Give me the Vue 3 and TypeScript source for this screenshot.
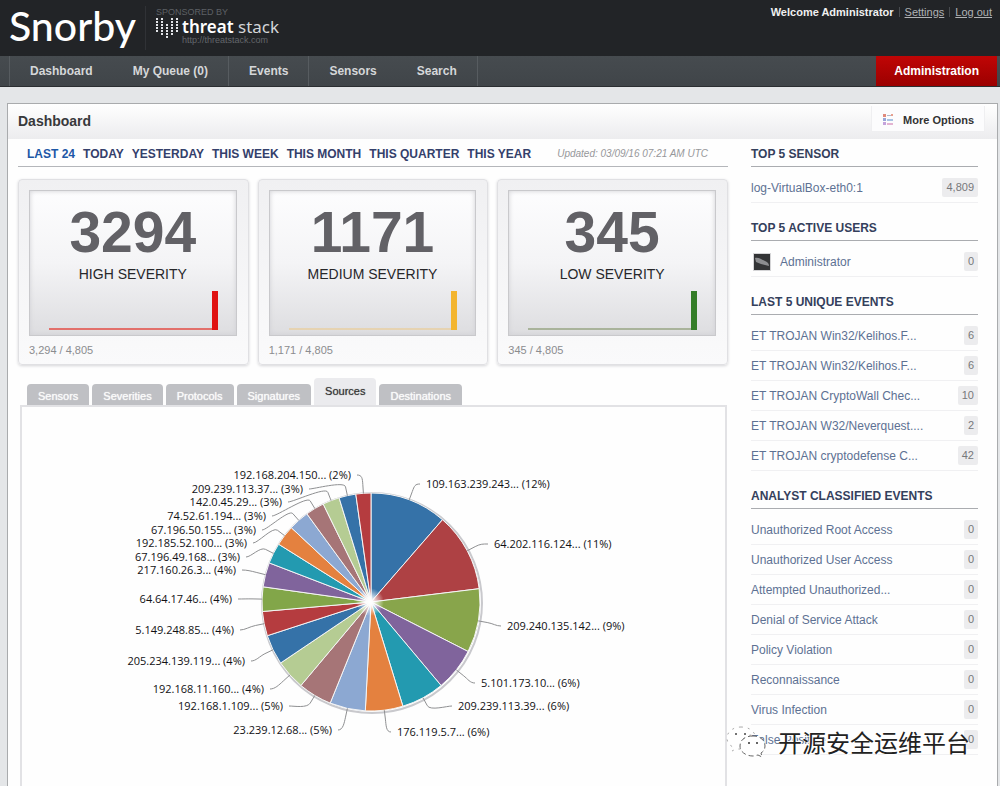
<script setup lang="ts">
interface NavItem { label: string; closes: boolean }
interface Severity { total: string; name: string; share: string; tone: string }
interface Entry { label: string; count: string; avatar?: boolean }
interface Section { title: string; entries: Entry[] }
interface Source { label: string; end: number; color: string; x: number; y: number }

const navItems: NavItem[] = [
  { label: 'Dashboard', closes: false },
  { label: 'My Queue (0)', closes: true },
  { label: 'Events', closes: true },
  { label: 'Sensors', closes: false },
  { label: 'Search', closes: true },
]

const ranges = ['LAST 24', 'TODAY', 'YESTERDAY', 'THIS WEEK', 'THIS MONTH', 'THIS QUARTER', 'THIS YEAR']

const severities: Severity[] = [
  { total: '3294', name: 'HIGH SEVERITY', share: '3,294 / 4,805', tone: 'high' },
  { total: '1171', name: 'MEDIUM SEVERITY', share: '1,171 / 4,805', tone: 'medium' },
  { total: '345', name: 'LOW SEVERITY', share: '345 / 4,805', tone: 'low' },
]

const tabs = ['Sensors', 'Severities', 'Protocols', 'Signatures', 'Sources', 'Destinations']

const sections: Section[] = [
  { title: 'TOP 5 SENSOR', entries: [{ label: 'log-VirtualBox-eth0:1', count: '4,809' }] },
  { title: 'TOP 5 ACTIVE USERS', entries: [{ label: 'Administrator', count: '0', avatar: true }] },
  {
    title: 'LAST 5 UNIQUE EVENTS',
    entries: [
      { label: 'ET TROJAN Win32/Kelihos.F...', count: '6' },
      { label: 'ET TROJAN Win32/Kelihos.F...', count: '6' },
      { label: 'ET TROJAN CryptoWall Chec...', count: '10' },
      { label: 'ET TROJAN W32/Neverquest....', count: '2' },
      { label: 'ET TROJAN cryptodefense C...', count: '42' },
    ],
  },
  {
    title: 'ANALYST CLASSIFIED EVENTS',
    entries: [
      { label: 'Unauthorized Root Access', count: '0' },
      { label: 'Unauthorized User Access', count: '0' },
      { label: 'Attempted Unauthorized...', count: '0' },
      { label: 'Denial of Service Attack', count: '0' },
      { label: 'Policy Violation', count: '0' },
      { label: 'Reconnaissance', count: '0' },
      { label: 'Virus Infection', count: '0' },
      { label: 'False Positive', count: '0' },
    ],
  },
]

// Slice ends are clockwise degrees from twelve o'clock; label points are relative to the pie's centre.
const sources: Source[] = [
  { label: '109.163.239.243... (12%)', end: 41, color: '#3572a8', x: 55, y: -118 },
  { label: '64.202.116.124... (11%)', end: 83, color: '#ae4144', x: 123, y: -58 },
  { label: '209.240.135.142... (9%)', end: 117, color: '#88a54b', x: 136, y: 24 },
  { label: '5.101.173.10... (6%)', end: 140, color: '#80649c', x: 110, y: 81 },
  { label: '209.239.113.39... (6%)', end: 163, color: '#239ab0', x: 87, y: 104 },
  { label: '176.119.5.7... (6%)', end: 183, color: '#e4813f', x: 26, y: 130 },
  { label: '23.239.12.68... (5%)', end: 202, color: '#8ca8d2', x: -39, y: 128 },
  { label: '192.168.1.109... (5%)', end: 220, color: '#a67577', x: -88, y: 104 },
  { label: '192.168.11.160... (4%)', end: 236, color: '#b5cc93', x: -107, y: 87 },
  { label: '205.234.139.119... (4%)', end: 252, color: '#3572a8', x: -126, y: 59 },
  { label: '5.149.248.85... (4%)', end: 265, color: '#b53c3f', x: -137, y: 28 },
  { label: '64.64.17.46... (4%)', end: 278, color: '#82a649', x: -139, y: -3 },
  { label: '217.160.26.3... (4%)', end: 291, color: '#80649c', x: -135, y: -32 },
  { label: '67.196.49.168... (3%)', end: 302, color: '#239ab0', x: -131, y: -45 },
  { label: '192.185.52.100... (3%)', end: 313, color: '#e4813f', x: -124, y: -59 },
  { label: '67.196.50.155... (3%)', end: 324, color: '#8ca8d2', x: -115, y: -72 },
  { label: '74.52.61.194... (3%)', end: 334, color: '#a67577', x: -105, y: -86 },
  { label: '142.0.45.29... (3%)', end: 343, color: '#b5cc93', x: -89, y: -100 },
  { label: '209.239.113.37... (3%)', end: 352, color: '#3572a8', x: -68, y: -113 },
  { label: '192.168.204.150... (2%)', end: 360, color: '#b53c3f', x: -20, y: -127 },
]

const radius = 109

function point(degrees: number, r: number): [number, number] {
  const a = (degrees * Math.PI) / 180
  return [Math.round(Math.sin(a) * r * 10) / 10, Math.round(-Math.cos(a) * r * 10) / 10]
}

const slices = sources.map((s, i) => {
  const start = i === 0 ? 0 : sources[i - 1].end
  const middle = (start + s.end) / 2
  const rim = point(middle, radius)
  const knee = point(middle, radius + 9)
  const bend = point(middle, radius + 15)
  const side = s.x > 0 ? 1 : -1
  return {
    ...s,
    anchor: s.x > 0 ? 'start' : 'end',
    area: `M0 0L${point(start, radius).join(' ')}A${radius} ${radius} 0 0 1 ${point(s.end, radius).join(' ')}Z`,
    line: `M${s.x - side * 6} ${s.y}C${s.x - side * 11} ${s.y} ${bend.join(' ')} ${knee.join(' ')}L${rim.join(' ')}`,
  }
})

// Threat Stack emblem: columns of dots, first and last dot row of each column.
const dotColumns: [number, number][] = [[0, 4], [0, 5], [2, 6], [0, 5], [0, 4]]
const dots = dotColumns.flatMap(([from, to], col) =>
  Array.from({ length: to - from + 1 }, (_, i) => ({ x: col * 5, y: (from + i) * 3 })),
)
</script>

<template>
  <div class="app">
    <header class="top">
      <a class="brand" href="#">Snorby</a>
      <a class="sponsor" href="#">
        <small class="by">SPONSORED BY</small>
        <span class="stack">
          <svg width="22" height="22" viewBox="0 0 22 22" aria-hidden="true">
            <rect v-for="(d, i) in dots" :key="i" :x="d.x" :y="d.y" width="2" height="2" fill="#e2e4e8" />
          </svg>
          <span class="stack-text">
            <span class="stack-name"><b>threat</b> stack</span>
            <small class="url">http://threatstack.com</small>
          </span>
        </span>
      </a>
      <div class="account">
        <strong>Welcome Administrator</strong><i></i><a href="#">Settings</a><i></i><a href="#">Log out</a>
      </div>
    </header>

    <nav class="menu">
      <a v-for="n in navItems" :key="n.label" href="#" :class="{ closes: n.closes }">{{ n.label }}</a>
      <a class="admin" href="#">Administration</a>
    </nav>

    <main class="panel">
      <div class="title">
        <h1>Dashboard</h1>
        <button class="more" type="button">
          <svg width="12" height="12" viewBox="0 0 12 12" aria-hidden="true">
            <rect x="1" y="0" width="3" height="3" fill="#e08a7c" /><rect x="5" y="1" width="6" height="1" fill="#b3b9cc" />
            <rect x="1" y="4" width="3" height="3" fill="#9aa6d8" /><rect x="5" y="5" width="6" height="2" fill="#a9c3e3" />
            <rect x="1" y="8" width="3" height="3" fill="#c4a3dc" /><rect x="5" y="9" width="6" height="2" fill="#e3b4d2" />
            <rect x="9" y="0" width="2" height="2" fill="#e6a08f" />
          </svg>
          More Options
        </button>
      </div>

      <div class="columns">
        <div class="left">
          <div class="ranges">
            <a v-for="(r, i) in ranges" :key="r" href="#" :class="{ current: i === 0 }">{{ r }}</a>
            <em>Updated: 03/09/16 07:21 AM UTC</em>
          </div>

          <div class="cards">
            <section v-for="s in severities" :key="s.tone" class="card" :class="s.tone">
              <div class="screen">
                <div class="total">{{ s.total }}</div>
                <div class="name">{{ s.name }}</div>
                <div class="spark"><span class="flat"></span><span class="peak"></span></div>
              </div>
              <div class="share">{{ s.share }}</div>
            </section>
          </div>

          <div class="tabs" role="tablist">
            <button v-for="t in tabs" :key="t" type="button" role="tab" :aria-selected="t === 'Sources'" :class="{ active: t === 'Sources' }">{{ t }}</button>
          </div>
          <div class="chart">
            <svg viewBox="-349 -195 703 376" role="img" aria-label="Sources">
              <defs>
                <radialGradient id="glow">
                  <stop offset="0" stop-color="#fff" />
                  <stop offset="0.3" stop-color="#fff" stop-opacity="0.85" />
                  <stop offset="1" stop-color="#fff" stop-opacity="0" />
                </radialGradient>
              </defs>
              <circle cx="1" cy="1" r="110" fill="#fff" stroke="#c9c9cd" stroke-width="2" />
              <g v-for="s in slices" :key="s.label">
                <path :d="s.area" :fill="s.color" class="slice" />
                <path :d="s.line" class="connector" />
                <text :x="s.x" :y="s.y + 4" :text-anchor="s.anchor">{{ s.label }}</text>
              </g>
              <circle cx="-1" cy="0" r="14" fill="url(#glow)" />
            </svg>
          </div>
        </div>

        <aside class="side">
          <section v-for="s in sections" :key="s.title">
            <h2>{{ s.title }}</h2>
            <ul>
              <li v-for="(e, i) in s.entries" :key="i">
                <svg v-if="e.avatar" width="18" height="18" viewBox="0 0 18 18" aria-hidden="true">
                  <rect width="18" height="18" fill="#d5d5d7" />
                  <rect x="1" y="1" width="16" height="16" fill="#333436" />
                  <path d="M2 5C6 4 9 7 12 8C14 9 16 10 16 13L12 12L8 11L3 9Z" fill="#8c8d90" />
                </svg>
                <a href="#">{{ e.label }}</a>
                <span class="count">{{ e.count }}</span>
              </li>
            </ul>
          </section>
        </aside>
      </div>
    </main>

    <div class="watermark">
      <svg width="42" height="34" viewBox="0 0 42 34" aria-hidden="true">
        <path d="M16 2C8 2 2 7 2 13C2 17 4 20 8 22L7 26L11 24C13 24 15 24 17 24C14 14 22 9 30 10C28 5 23 2 16 2Z" fill="#fff" stroke="#aaa" stroke-width="1" stroke-dasharray="2 5" />
        <path d="M28 11C20 11 15 15 15 21C15 27 21 31 28 31C30 31 32 30 33 30L37 32L36 28C39 26 40 24 40 21C40 15 35 11 28 11Z" fill="#fff" stroke="#666" stroke-width="1" stroke-dasharray="5 3" />
        <circle cx="11" cy="9" r="1" fill="#444" /><circle cx="20" cy="9" r="1" fill="#444" />
        <circle cx="24" cy="18" r="1" fill="#333" /><circle cx="32" cy="18" r="1" fill="#333" />
      </svg>
      <span>开源安全运维平台</span>
    </div>
  </div>
</template>

<style>
body {
  margin: 0;
  background: #e4e6e8;
}
</style>

<style scoped>
.app {
  position: relative;
  display: flex;
  flex-direction: column;
  min-height: 100vh;
  overflow: hidden;
  font-family: "Liberation Sans", Arial, sans-serif;
  font-size: 12px;
  color: #333;
}
a {
  text-decoration: none;
}
.top {
  display: flex;
  height: 56px;
  padding: 0 8px 0 9px;
  background: #222427;
}
.brand {
  width: 136px;
  border-right: 1px solid #303236;
  margin: 6px 10px 6px 0;
  color: #fff;
  font-family: Lato, sans-serif;
  font-size: 41px;
  font-weight: 500;
  line-height: 40px;
}
.sponsor {
  display: flex;
  flex-direction: column;
  padding-top: 6px;
  color: #d3d5d8;
}
.by {
  color: #5d6065;
  font-size: 9px;
  line-height: 12px;
}
.stack {
  display: flex;
  gap: 4px;
}
.stack-text {
  display: flex;
  flex-direction: column;
}
.stack-name {
  font-family: "Noto Sans", sans-serif;
  font-size: 17px;
  line-height: 18px;
}
.stack-name b {
  font-weight: 600;
  color: #fff;
}
.url {
  color: #63666b;
  font-size: 9px;
  line-height: 8px;
}
.account {
  display: flex;
  align-items: center;
  height: 24px;
  margin-left: auto;
  font-size: 11px;
  color: #f0f0f0;
}
.account a {
  color: #b0b2b5;
  text-decoration: underline;
}
.account i {
  width: 1px;
  height: 10px;
  margin: 0 5px;
  background: #484b4f;
}
.menu {
  display: flex;
  height: 31px;
  padding: 0 3px 0 9px;
  background: linear-gradient(#464b4f, #404549);
  border-bottom: 1px solid #2b2e31;
  box-sizing: border-box;
}
.menu a {
  padding: 0 20px;
  color: #d5d7d9;
  font-weight: bold;
  line-height: 30px;
}
.menu a:first-child {
  border-left: 1px solid #575c60;
}
.menu a.closes {
  border-right: 1px solid #575c60;
}
.menu a.admin {
  margin-left: auto;
  padding: 0 18px;
  background: linear-gradient(#c00505, #9b0000);
  color: #fff;
}
.panel {
  display: flex;
  flex: 1;
  flex-direction: column;
  margin: 16px 2px 0 7px;
  background: #fefefe;
  border: 1px solid #a9abad;
  border-bottom: 0;
}
.title {
  display: flex;
  justify-content: space-between;
  height: 35px;
  padding: 0 12px 0 10px;
  background: linear-gradient(#fff, #ececee);
}
h1 {
  margin: 0;
  color: #38393b;
  font-size: 14px;
  line-height: 35px;
}
.more {
  display: flex;
  align-items: center;
  gap: 9px;
  height: 26px;
  margin-top: 2px;
  padding: 2px 10px 0;
  border: 1px solid #efeff1;
  border-top: 0;
  background: #fcfcfd;
  color: #333;
  font-family: inherit;
  font-size: 11px;
  font-weight: bold;
}
.columns {
  display: grid;
  flex: 1;
  grid-template-columns: minmax(0, 1fr) 227px;
  gap: 23px;
  padding: 0 19px 0 10px;
}
.left {
  display: flex;
  flex-direction: column;
}
.ranges {
  display: flex;
  gap: 8px;
  height: 27px;
  padding: 0 20px 0 9px;
  border-bottom: 1px solid #b4b6ba;
  line-height: 30px;
  white-space: nowrap;
}
.ranges a {
  color: #34406b;
  font-weight: bold;
}
.ranges a.current {
  color: #1d57a6;
}
.ranges em {
  margin-left: auto;
  color: #96979a;
  font-size: 10px;
}
.cards {
  display: grid;
  grid-template-columns: repeat(3, minmax(0, 1fr));
  gap: 9px;
  margin-top: 12px;
}
.card {
  padding: 10px 11px 0 10px;
  border: 1px solid #e0e0e3;
  border-radius: 4px;
  background: linear-gradient(#f0f0f2, #fafafb);
  box-shadow: 0 1px 3px #d5d5d8;
}
.screen {
  height: 144px;
  border: 1px solid #c9c9cc;
  background: linear-gradient(#fdfdfe, #f4f4f6 50%, #dddde0);
  box-shadow: inset 0 0 5px #d0d0d4;
  text-align: center;
}
.total {
  padding-top: 8px;
  color: #626166;
  font-size: 57px;
  font-weight: bold;
  line-height: 66px;
}
.name {
  color: #27272a;
  font-size: 14px;
  line-height: 18px;
}
.spark {
  display: flex;
  align-items: flex-end;
  height: 39px;
  margin: 8px 18px 0 19px;
}
.flat {
  flex: 1;
  height: 2px;
  background: var(--faint);
}
.peak {
  width: 6px;
  height: 39px;
  background: var(--tone);
}
.high { --tone: #e01212; --faint: #e2706b; }
.medium { --tone: #f3b52f; --faint: #e6d3b2; }
.low { --tone: #347d28; --faint: #a9b39b; }
.share {
  color: #8b8c8f;
  font-size: 11px;
  line-height: 28px;
}
.tabs {
  display: flex;
  align-items: flex-end;
  gap: 3px;
  height: 27px;
  margin-top: 13px;
  padding-left: 9px;
}
.tabs button {
  height: 21px;
  padding: 2px 11px 0;
  border: 0;
  border-radius: 4px 4px 0 0;
  background: #bfc0c4;
  color: #fafafa;
  font-family: inherit;
  font-size: 11px;
  text-shadow: 0 0 1px #fff;
}
.tabs button.active {
  height: 27px;
  padding-bottom: 4px;
  background: #ebebee;
  color: #333;
  text-shadow: 0 0 1px #777;
}
.chart {
  flex: 1;
  margin: 0 1px 0 2px;
  border: 2px solid #e2e2e5;
  border-bottom: 0;
  background: #fefefe;
}
.chart svg {
  display: block;
  width: 100%;
}
.slice {
  stroke: #f5f5f5;
  stroke-width: 1;
}
.connector {
  fill: none;
  stroke: #8f9092;
  stroke-width: 1;
}
.chart text {
  fill: #111114;
  font-family: "Open Sans", sans-serif;
  font-size: 11px;
}
h2 {
  height: 27px;
  margin: 0;
  border-bottom: 1px solid #aaacb0;
  color: #34405c;
  font-size: 12px;
  line-height: 30px;
}
.side section + section h2 {
  margin-top: 10px;
}
ul {
  margin: 0;
  padding: 6px 0 0;
  list-style: none;
}
li {
  display: flex;
  align-items: center;
  height: 29px;
  border-bottom: 1px solid #f0f0f2;
}
li svg {
  margin: 0 9px 0 2px;
}
li a {
  color: #5d7193;
}
.count {
  margin-left: auto;
  padding: 0 4px;
  border-radius: 2px;
  background: #ececee;
  color: #77787b;
  font-size: 11px;
  line-height: 19px;
}
.watermark {
  position: absolute;
  right: 30px;
  bottom: 26px;
  display: flex;
  align-items: center;
  gap: 11px;
  color: #222;
  font-family: "Noto Sans CJK SC", sans-serif;
  font-size: 24px;
  line-height: 36px;
  text-shadow: -1px -1px 0 #fff, 1px 1px 0 #fff;
}
</style>
